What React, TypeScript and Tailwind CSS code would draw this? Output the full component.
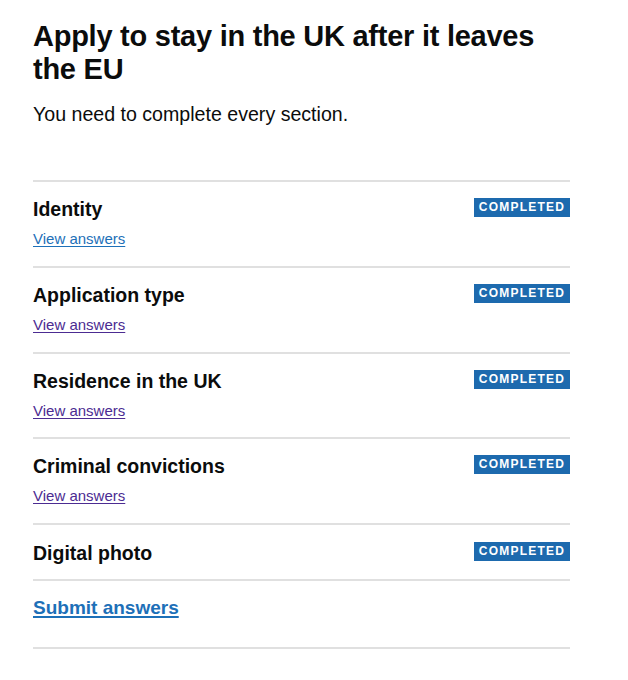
import React from "react";

const rows = [
  { title: "Identity", link: true, visited: false },
  { title: "Application type", link: true, visited: true },
  { title: "Residence in the UK", link: true, visited: true },
  { title: "Criminal convictions", link: true, visited: true },
  { title: "Digital photo", link: false, visited: false },
];

function Badge() {
  return (
    <span className="mt-[1px] inline-block shrink-0 bg-[#1d6aae] px-[5px] text-[12px] font-bold uppercase leading-[19px] tracking-[1.2px] text-white">
      Completed
    </span>
  );
}

export default function App() {
  return (
    <div
      className="min-h-[680px] bg-white pl-[33px] pt-[20px] text-[#0b0c0c]"
      style={{ fontFamily: '"Liberation Sans", Arial, sans-serif' }}
    >
      <div className="w-[537px]">
        <h1 className="text-[29px] font-bold leading-[33px] tracking-[-0.25px]">
          Apply to stay in the UK after it leaves the EU
        </h1>
        <p className="mt-[16px] text-[19.6px] leading-[25px]">
          You need to complete every section.
        </p>
        <ul className="mt-[53px] border-t-2 border-[#e0e0e0]">
          {rows.map((r) =>
            r.link ? (
              <li
                key={r.title}
                className="flex items-start justify-between border-b-2 border-[#e0e0e0] pb-[16.75px] pt-[15px]"
              >
                <div>
                  <h2 className="text-[19.5px] font-bold leading-[25px]">{r.title}</h2>
                  <a
                    href="#"
                    className={
                      "mt-[7px] block w-max text-[15px] leading-[20px] underline decoration-1 underline-offset-[2px] " +
                      (r.visited ? "text-[#4c2c92]" : "text-[#1d70b8]")
                    }
                  >
                    View answers
                  </a>
                </div>
                <Badge />
              </li>
            ) : (
              <li
                key={r.title}
                className="flex items-start justify-between border-b-2 border-[#e0e0e0] pb-[13px] pt-[16px]"
              >
                <h2 className="text-[19.5px] font-bold leading-[25px]">{r.title}</h2>
                <Badge />
              </li>
            )
          )}
          <li className="border-b-2 border-[#e0e0e0] pb-[26px] pt-[14px]">
            <a
              href="#"
              className="text-[19px] font-bold leading-[25px] text-[#1d70b8] underline decoration-[1.5px] underline-offset-[2px]"
            >
              Submit answers
            </a>
          </li>
        </ul>
      </div>
    </div>
  );
}
